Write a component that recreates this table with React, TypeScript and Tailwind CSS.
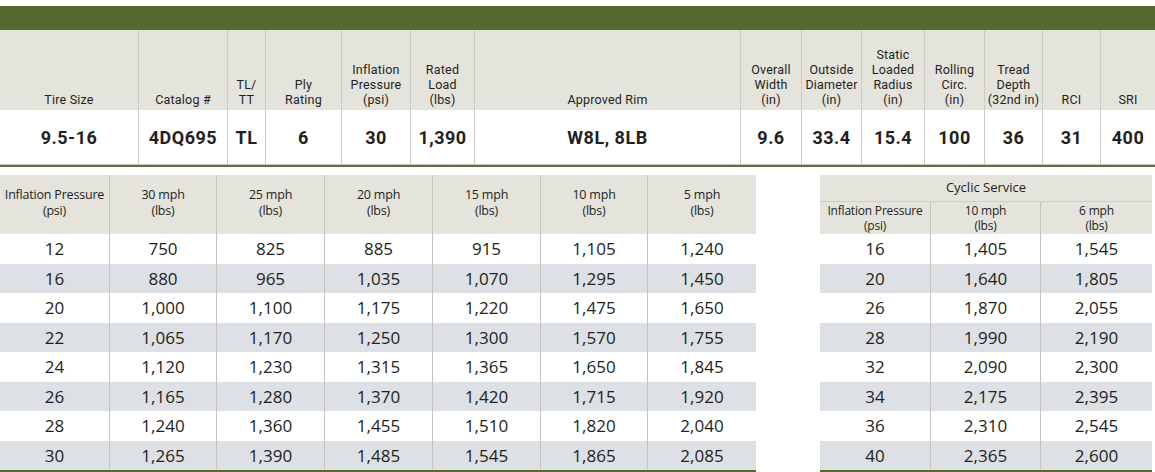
import React from "react";

const condensed = { fontFamily: '"Liberation Sans Narrow", Roboto, "Liberation Sans", sans-serif' };
const body = { fontFamily: '"Open Sans", "Noto Sans", sans-serif' };

const topCols: { h: string[]; v: string }[] = [
  { h: ["Tire Size"], v: "9.5-16" },
  { h: ["Catalog #"], v: "4DQ695" },
  { h: ["TL/", "TT"], v: "TL" },
  { h: ["Ply", "Rating"], v: "6" },
  { h: ["Inflation", "Pressure", "(psi)"], v: "30" },
  { h: ["Rated", "Load", "(lbs)"], v: "1,390" },
  { h: ["Approved Rim"], v: "W8L, 8LB" },
  { h: ["Overall", "Width", "(in)"], v: "9.6" },
  { h: ["Outside", "Diameter", "(in)"], v: "33.4" },
  { h: ["Static", "Loaded", "Radius", "(in)"], v: "15.4" },
  { h: ["Rolling", "Circ.", "(in)"], v: "100" },
  { h: ["Tread", "Depth", "(32nd in)"], v: "36" },
  { h: ["RCI"], v: "31" },
  { h: ["SRI"], v: "400" },
];

const loadHeaders: string[][] = [
  ["Inflation Pressure", "(psi)"],
  ["30 mph", "(lbs)"],
  ["25 mph", "(lbs)"],
  ["20 mph", "(lbs)"],
  ["15 mph", "(lbs)"],
  ["10 mph", "(lbs)"],
  ["5 mph", "(lbs)"],
];

const loadRows: string[][] = [
  ["12", "750", "825", "885", "915", "1,105", "1,240"],
  ["16", "880", "965", "1,035", "1,070", "1,295", "1,450"],
  ["20", "1,000", "1,100", "1,175", "1,220", "1,475", "1,650"],
  ["22", "1,065", "1,170", "1,250", "1,300", "1,570", "1,755"],
  ["24", "1,120", "1,230", "1,315", "1,365", "1,650", "1,845"],
  ["26", "1,165", "1,280", "1,370", "1,420", "1,715", "1,920"],
  ["28", "1,240", "1,360", "1,455", "1,510", "1,820", "2,040"],
  ["30", "1,265", "1,390", "1,485", "1,545", "1,865", "2,085"],
];

const cyclicRows: string[][] = [
  ["16", "1,405", "1,545"],
  ["20", "1,640", "1,805"],
  ["26", "1,870", "2,055"],
  ["28", "1,990", "2,190"],
  ["32", "2,090", "2,300"],
  ["34", "2,175", "2,395"],
  ["36", "2,310", "2,545"],
  ["40", "2,365", "2,600"],
];

export default function App() {
  return (
    <div className="w-[1155px] h-[472px] bg-white text-[#231f20] overflow-hidden pt-[6px]">
      <div className="h-[24px] bg-[#56692e]" />
      <div
        className="grid grid-cols-[139px_89px_38px_76px_69px_64px_266px_61px_60px_63px_60px_58px_58px_54px]"
        style={condensed}
      >
        {topCols.map((c, i) => (
          <div
            key={"h" + i}
            className={`h-[80px] bg-[#e4e4dc] flex flex-col items-center justify-end pb-[3px] text-[12.5px] leading-[15px] text-center tracking-[0.2px] ${
              i < topCols.length - 1 ? "border-r border-[#cbcbc3]" : ""
            }`}
          >
            {c.h.map((t, j) => (
              <span key={j}>{t}</span>
            ))}
          </div>
        ))}
        {topCols.map((c, i) => (
          <div
            key={"v" + i}
            className={`h-[55px] bg-white flex items-center justify-center text-[18px] font-bold tracking-[0.5px] border-b border-[#c8c8c0] ${
              i < topCols.length - 1 ? "border-r border-r-[#cbcbc3]" : ""
            }`}
          >
            {c.v}
          </div>
        ))}
      </div>
      <div className="h-[2px] bg-[#5d6f3a]" />

      <div className="flex mt-[8px]" style={body}>
        <div className="w-[756px] border-b-2 border-[#56692e]">
          <div className="grid grid-cols-[110px_107px_108px_108px_108px_107px_108px]">
            {loadHeaders.map((h, i) => (
              <div
                key={"lh" + i}
                className={`h-[59px] bg-[#e4e4dc] flex flex-col items-center pt-[12px] text-[12.5px] leading-[16px] tracking-[-0.2px] text-center ${
                  i < 6 ? "border-r border-[#c4c4bc]" : ""
                }`}
              >
                <span>{h[0]}</span>
                <span>{h[1]}</span>
              </div>
            ))}
            {loadRows.map((r, ri) =>
              r.map((v, ci) => (
                <div
                  key={ri + "-" + ci}
                  className={`h-[29.5px] flex items-center justify-center text-[17px] ${
                    ri % 2 === 1 ? "bg-[#dde0e4]" : "bg-white"
                  } ${ci < 6 ? "border-r border-[#c4c4bc]" : ""}`}
                >
                  {v}
                </div>
              ))
            )}
          </div>
        </div>

        <div className="ml-[64px] w-[332px] border-b-2 border-[#56692e]">
          <div className="h-[27px] bg-[#e4e4dc] flex items-center justify-center text-[13px] border-b border-[#cfcfc7]">
            Cyclic Service
          </div>
          <div className="grid grid-cols-[111px_110px_111px]">
            {[
              ["Inflation Pressure", "(psi)"],
              ["10 mph", "(lbs)"],
              ["6 mph", "(lbs)"],
            ].map((h, i) => (
              <div
                key={"ch" + i}
                className={`h-[32px] bg-[#e4e4dc] flex flex-col items-center pt-[1px] text-[12px] leading-[15px] tracking-[-0.2px] text-center ${
                  i < 2 ? "border-r border-[#c4c4bc]" : ""
                }`}
              >
                <span>{h[0]}</span>
                <span>{h[1]}</span>
              </div>
            ))}
            {cyclicRows.map((r, ri) =>
              r.map((v, ci) => (
                <div
                  key={"c" + ri + "-" + ci}
                  className={`h-[29.5px] flex items-center justify-center text-[17px] ${
                    ri % 2 === 1 ? "bg-[#dde0e4]" : "bg-white"
                  } ${ci < 2 ? "border-r border-[#c4c4bc]" : ""}`}
                >
                  {v}
                </div>
              ))
            )}
          </div>
        </div>
      </div>
    </div>
  );
}
